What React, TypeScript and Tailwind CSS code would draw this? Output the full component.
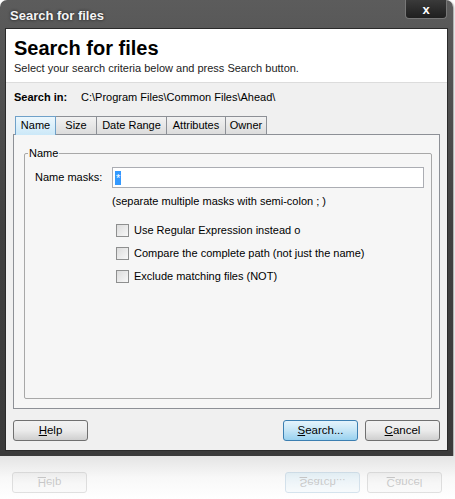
import React from 'react';

const font = { fontFamily: '"Liberation Sans", Arial, sans-serif' };

const tabs = ['Name', 'Size', 'Date Range', 'Attributes', 'Owner'];
const tabWidths = ['w-[41px]', 'w-[42px]', 'w-[71px]', 'w-[60px]', 'w-[42px]'];

const options = [
    'Use Regular Expression instead o',
    'Compare the complete path (not just the name)',
    'Exclude matching files (NOT)',
];

const Button: React.FC<{ label: string; u: string; rest: string; primary?: boolean; ghost?: boolean }> = ({ label, u, rest, primary, ghost }) => {
    const tone = primary
        ? 'border-[#3c7fb1] bg-gradient-to-b from-[#e5f4fc] via-[#c4e5f6] to-[#98d1ef]'
        : 'border-[#707070] bg-gradient-to-b from-[#f2f2f2] via-[#ebebeb] to-[#cfcfcf]';
    return (
        <div
            className={`w-[75px] h-[21px] rounded-[3px] border flex items-center justify-center text-[11.5px] text-black ${tone} ${ghost ? 'opacity-20 -scale-y-100' : ''}`}
        >
            <span><span className="underline">{u}</span>{rest}</span>
        </div>
    );
};

const App: React.FC = () => {
    return (
        <div className="w-[455px] h-[499px] bg-white overflow-hidden" style={font}>
            <div className="w-[453px] h-[456px] rounded-t-[7px] bg-gradient-to-b from-[#5c5c5c] via-[#404040] to-[#3a3a3a] px-[5px] pb-[5px] flex flex-col shadow-[1px_1px_2px_rgba(0,0,0,0.4)]">
                <div className="h-[28px] flex items-start justify-between shrink-0">
                    <div className="pl-[5px] pt-[6px] text-[13px] font-bold text-[#f4f4f4] [text-shadow:0_0_3px_rgba(0,0,0,0.8)]">Search for files</div>
                    <div className="w-[42px] h-[19px] mr-[1px] rounded-b-[4px] border border-t-0 border-[#777] bg-gradient-to-b from-[#3a3a3a] to-[#1f1f1f] flex items-center justify-center text-white font-bold text-[13px] leading-none">
                        x
                    </div>
                </div>

                <div className="flex-1 flex flex-col bg-[#f0f0f0] border border-[#2a2a2a]">
                    <div className="h-[54px] bg-white border-b border-[#dcdcdc] px-[8px] pt-[7px]">
                        <div className="text-[20px] font-bold leading-[24px] text-black">Search for files</div>
                        <div className="text-[11px] leading-[14px] text-[#222] mt-[1px]">Select your search criteria below and press Search button.</div>
                    </div>

                    <div className="flex items-center h-[28px] px-[8px] text-[11px] text-black">
                        <span className="font-bold w-[67px]">Search in:</span>
                        <span>C:\Program Files\Common Files\Ahead\</span>
                    </div>

                    <div className="px-[7px] mt-[4px]">
                        <div className="flex items-end pl-[2px] h-[19px]">
                            {tabs.map((t, i) => (
                                <div
                                    key={t}
                                    className={`${tabWidths[i]} flex items-center justify-center text-[11px] text-black border border-b-0 ${
                                        i === 0
                                            ? 'h-[19px] border-[#6fa1c9] bg-gradient-to-b from-[#ecf7fd] to-[#cbe8f8] relative z-10 -mb-px pb-px'
                                            : 'h-[18px] border-[#8d9096] -ml-px bg-gradient-to-b from-[#f2f2f2] to-[#dcdcdc]'
                                    }`}
                                >
                                    {t}
                                </div>
                            ))}
                        </div>
                        <div className="h-[275px] border border-[#8d9096] bg-[#f6f6f6] pt-[18px] pl-[10px] pr-[7px] pb-[9px]">
                            <div className="relative h-full border border-[#a8a8a8] rounded-[2px]">
                                <span className="absolute -top-[8px] left-[3px] bg-[#f6f6f6] px-[1px] text-[11px] leading-[14px] text-black">Name</span>
                                <div className="flex items-center mt-[13px] pl-[10px] pr-[7px]">
                                    <span className="w-[77px] text-[11px] text-black">Name masks:</span>
                                    <div className="flex-1 h-[21px] bg-white border border-[#abadb3] flex items-center pl-[2px]">
                                        <span className="bg-[#3399ff] text-white text-[11px] leading-[14px] px-[1px]">*</span>
                                    </div>
                                </div>
                                <div className="pl-[87px] mt-[5px] text-[11px] text-black">(separate multiple masks with semi-colon ; )</div>
                                <div className="flex flex-col gap-[10px] pl-[91px] mt-[14px]">
                                    {options.map((o) => (
                                        <div key={o} className="flex items-center gap-[5px] h-[13px]">
                                            <div className="w-[13px] h-[13px] border border-[#8e8f8f] bg-gradient-to-br from-[#dcdcdc] to-[#f8f8f8]" />
                                            <span className="text-[11px] text-black">{o}</span>
                                        </div>
                                    ))}
                                </div>
                            </div>
                        </div>
                    </div>

                    <div className="flex items-center justify-between px-[7px] mt-[11px]">
                        <Button label="Help" u="H" rest="elp" />
                        <div className="flex gap-[7px]">
                            <Button label="Search" u="S" rest="earch..." primary />
                            <Button label="Cancel" u="C" rest="ancel" />
                        </div>
                    </div>
                </div>
            </div>

            <div className="h-[43px] bg-gradient-to-b from-[#e4e4e4] via-[#f8f8f8] to-white pt-[16px] px-[12px] flex justify-between">
                <Button label="Help" u="H" rest="elp" ghost />
                <div className="flex gap-[7px] pr-[1px]">
                    <Button label="Search" u="S" rest="earch..." primary ghost />
                    <Button label="Cancel" u="C" rest="ancel" ghost />
                </div>
            </div>
        </div>
    );
};

export default App;
